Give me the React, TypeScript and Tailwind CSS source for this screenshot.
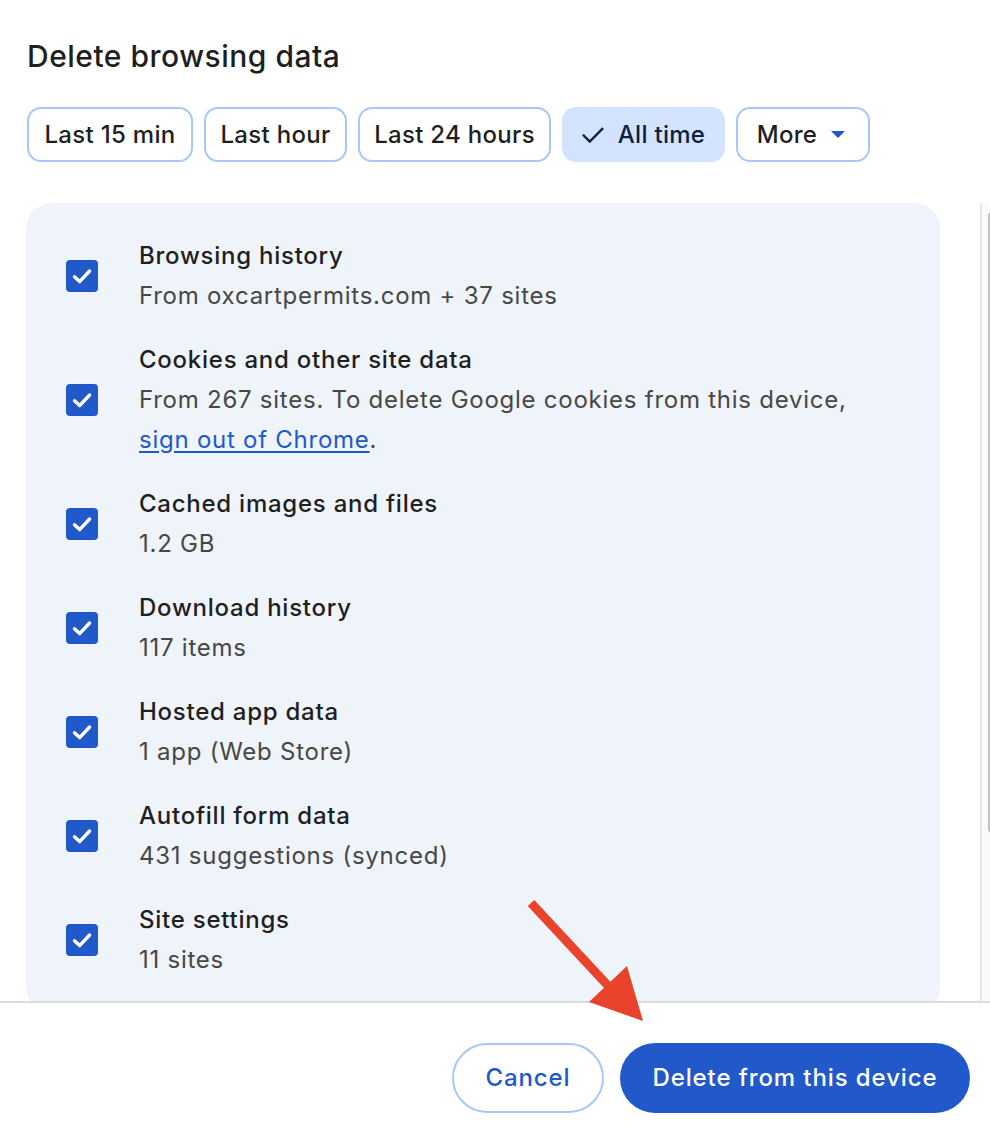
import React from "react";

const items: { title: string; sub: React.ReactNode }[] = [
  { title: "Browsing history", sub: "From oxcartpermits.com + 37 sites" },
  {
    title: "Cookies and other site data",
    sub: (
      <>
        From 267 sites. To delete Google cookies from this device,
        <br />
        <span className="text-[#2159ca] underline underline-offset-[3px] decoration-[1.5px]">sign out of Chrome</span>.
      </>
    ),
  },
  { title: "Cached images and files", sub: "1.2 GB" },
  { title: "Download history", sub: "117 items" },
  { title: "Hosted app data", sub: "1 app (Web Store)" },
  { title: "Autofill form data", sub: "431 suggestions (synced)" },
  { title: "Site settings", sub: "11 sites" },
];

function Checkbox() {
  return (
    <div className="w-[32px] h-[32px] rounded-[4px] bg-[#2159ca] flex items-center justify-center shrink-0">
      <svg width="32" height="32" viewBox="0 0 32 32">
        <path d="M8.5 16.8 L13.6 21.6 L23.6 11" fill="none" stroke="white" strokeWidth="3.4" strokeLinecap="round" strokeLinejoin="round" />
      </svg>
    </div>
  );
}

function Chip({ children, w, selected }: { children: React.ReactNode; w: string; selected?: boolean }) {
  return (
    <div
      className={
        "h-[55px] rounded-[14px] flex items-center justify-center text-[24px] font-medium tracking-[0.3px] shrink-0 " +
        w +
        (selected ? " bg-[#d3e3fd] text-[#0a1f44]" : " border-2 border-[#a8c7fa] text-[#1f1f1f]")
      }
    >
      {children}
    </div>
  );
}

export default function App() {
  return (
    <div
      className="w-[990px] h-[1138px] bg-white relative overflow-hidden flex flex-col"
      style={{ fontFamily: "Inter, 'Noto Sans', Arial, sans-serif" }}
    >
      <div className="pt-[38px] pl-[27px]">
        <h1 className="text-[30px] leading-[36px] font-medium text-[#1f1f1f] tracking-[0.5px]">Delete browsing data</h1>
        <div className="mt-[33px] flex gap-[11px]">
          <Chip w="w-[166px]">Last 15 min</Chip>
          <Chip w="w-[143px]">Last hour</Chip>
          <Chip w="w-[193px]">Last 24 hours</Chip>
          <Chip w="w-[163px]" selected>
            <svg width="26" height="26" viewBox="0 0 24 24" className="mr-[12px] ml-[-2px]">
              <path d="M3.5 12.5 L9 18 L20.5 6.5" fill="none" stroke="#0a1f44" strokeWidth="2.2" strokeLinecap="square" />
            </svg>
            All time
          </Chip>
          <Chip w="w-[134px]">
            <span className="ml-[-4px]">More</span>
            <svg width="14" height="8" viewBox="0 0 14 8" className="ml-[14px]">
              <path d="M0 0 L14 0 L7 7 Z" fill="#2159ca" />
            </svg>
          </Chip>
        </div>
      </div>

      <div className="mt-[41px] h-[798px] flex shrink-0">
        <div className="flex-1 overflow-hidden pl-[26px] pr-[40px]">
          <div className="bg-[#eff3fa] rounded-[26px] pt-[33px] pb-[33px] flex flex-col gap-[24px]">
            {items.map((it, i) => (
              <div key={i} className="flex items-center">
                <div className="ml-[40px] mr-[41px]">
                  <Checkbox />
                </div>
                <div className="text-[24px] leading-[40px] tracking-[0.75px]">
                  <div className="font-medium text-[#1f1f1f]">{it.title}</div>
                  <div className="text-[#474747]">{it.sub}</div>
                </div>
              </div>
            ))}
          </div>
        </div>
        <div className="w-[10px] border-l-2 border-[#e8e8e8] bg-[#fafafa] overflow-hidden">
          <div className="mt-[9px] ml-[6px] w-[8px] h-[621px] rounded-[4px] bg-[#c1c1c1]" />
        </div>
      </div>

      <div className="border-t-2 border-[#dadce0] flex justify-end gap-[16px] pt-[40px] pr-[20px]">
        <button className="w-[152px] h-[70px] rounded-full border-2 border-[#a8c7fa] text-[#2159ca] text-[24px] font-medium tracking-[0.9px]">
          Cancel
        </button>
        <button className="w-[350px] h-[70px] rounded-full bg-[#2159ca] text-white text-[24px] font-medium tracking-[0.9px]">
          Delete from this device
        </button>
      </div>

      <svg className="absolute left-0 top-0 pointer-events-none" width="990" height="1138" viewBox="0 0 990 1138">
        <line x1="531" y1="903" x2="612" y2="990" stroke="#e9432b" strokeWidth="9" />
        <polygon points="589,1002 627,966 643,1021" fill="#e9432b" />
      </svg>
    </div>
  );
}
